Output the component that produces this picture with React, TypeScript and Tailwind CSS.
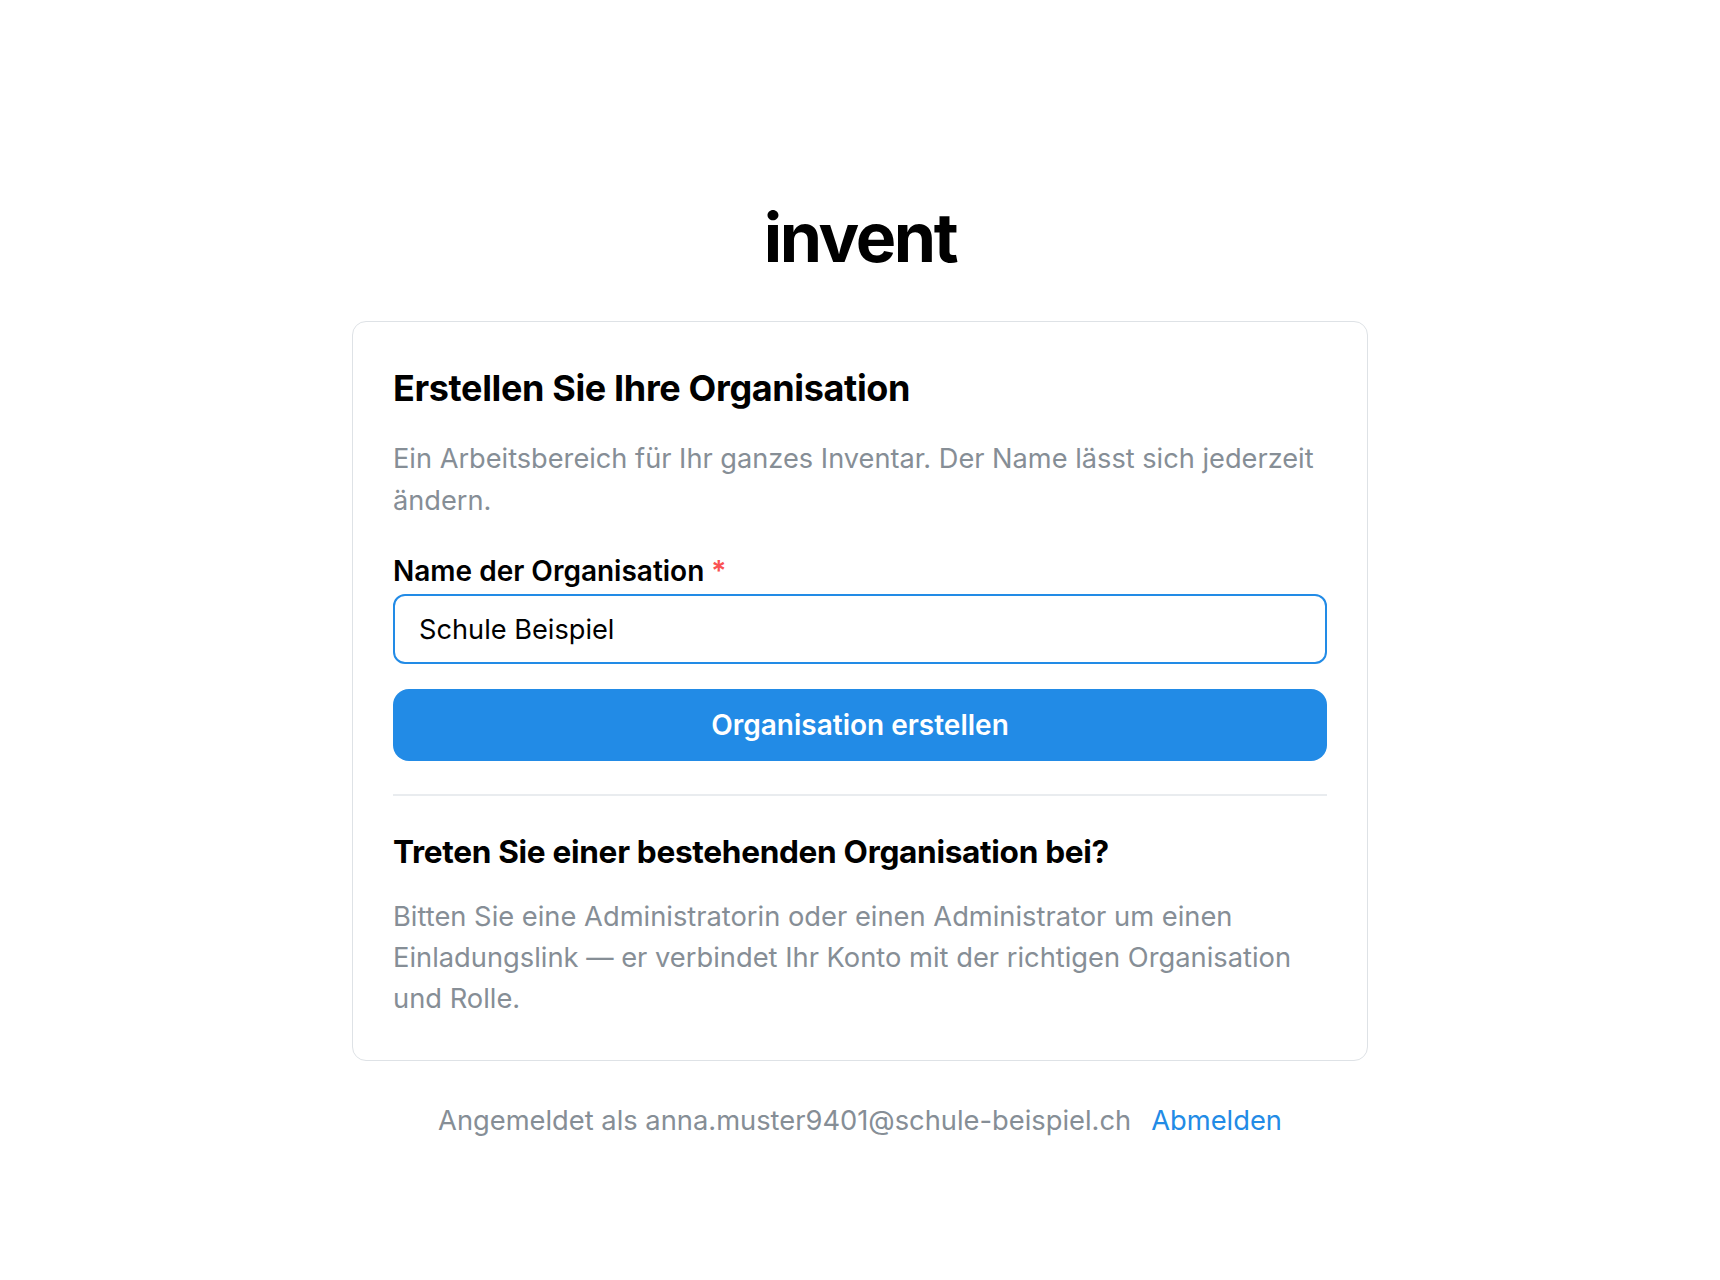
import React from "react";

export default function App() {
  return (
    <div className="min-h-screen w-full bg-white font-[family-name:Inter,'Noto_Sans',sans-serif] text-black antialiased">
      <div className="flex flex-col items-center pt-[203px] pb-[80px]">
        <h1 className="text-[68px] leading-[68px] font-bold tracking-[-0.035em] text-black">invent</h1>

        <div className="mt-[50px] w-[1016px] rounded-[14px] border border-[#dee2e6] bg-white px-[40px] pt-[48px] pb-[41px]">
          <h2 className="text-[36px] leading-[36px] font-bold tracking-[-0.01em] text-black">
            Erstellen Sie Ihre Organisation
          </h2>
          <p className="mt-[32px] text-[27.2px] leading-[42px] text-[#868e96]">
            Ein Arbeitsbereich für Ihr ganzes Inventar. Der Name lässt sich jederzeit ändern.
          </p>

          <label className="mt-[33px] mb-[7px] block text-[28px] leading-[32px] font-semibold text-black">
            Name der Organisation <span className="text-[#fa5252]">*</span>
          </label>
          <input
            type="text"
            defaultValue="Schule Beispiel"
            className="block h-[70px] w-full rounded-[12px] border-2 border-[#228be6] bg-white px-[24px] text-[27.2px] text-black outline-none"
          />

          <button
            type="button"
            className="mt-[25px] flex h-[72px] w-full items-center justify-center rounded-[16px] bg-[#228be6] text-[28px] font-semibold text-white"
          >
            Organisation erstellen
          </button>

          <div className="mt-[33px] h-[2px] w-full bg-[#e9ecef]" />

          <h3 className="mt-[38px] text-[31.6px] leading-[36px] font-bold tracking-[-0.01em] text-black">
            Treten Sie einer bestehenden Organisation bei?
          </h3>
          <p className="mt-[26px] text-[27.3px] leading-[41px] text-[#868e96]">
            Bitten Sie eine Administratorin oder einen Administrator um einen Einladungslink — er verbindet Ihr Konto mit der richtigen Organisation und Rolle.
          </p>
        </div>

        <div className="mt-[40px] flex items-center gap-[20px] text-[27.3px] leading-[40px]">
          <span className="text-[#868e96]">Angemeldet als anna.muster9401@schule-beispiel.ch</span>
          <a href="#" className="text-[#228be6]">Abmelden</a>
        </div>
      </div>
    </div>
  );
}
